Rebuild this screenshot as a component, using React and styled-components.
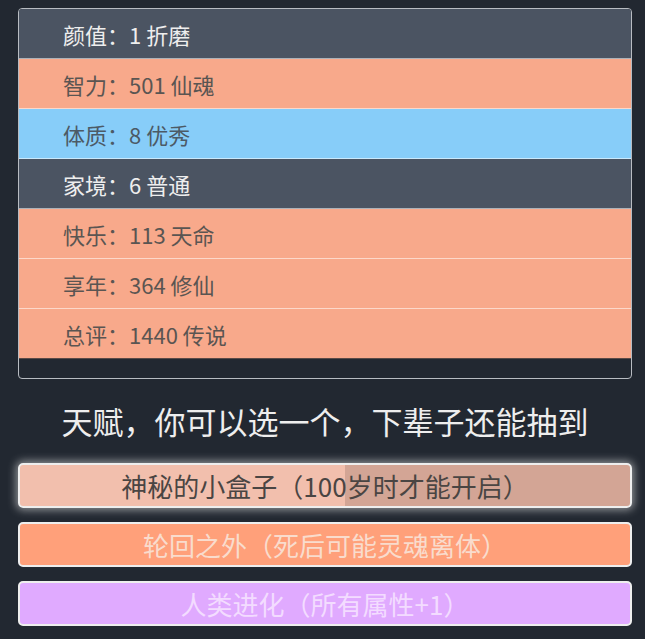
import styled, { createGlobalStyle } from "styled-components";

const GlobalStyle = createGlobalStyle`
  html, body {
    margin: 0;
    padding: 0;
    background: #222831;
  }
  body {
    font-family: "Noto Sans CJK SC", "Noto Sans", sans-serif;
  }
`;

const rowColors = {
  dark: { bg: "#4b5462", fg: "#eeeeee" },
  orange: { bg: "#f8a98b", fg: "#5a5552" },
  blue: { bg: "#87cdf9", fg: "#4c5a66" },
};

const props = [
  { label: "颜值", value: "1 折磨", tone: "dark" },
  { label: "智力", value: "501 仙魂", tone: "orange" },
  { label: "体质", value: "8 优秀", tone: "blue" },
  { label: "家境", value: "6 普通", tone: "dark" },
  { label: "快乐", value: "113 天命", tone: "orange" },
  { label: "享年", value: "364 修仙", tone: "orange" },
  { label: "总评", value: "1440 传说", tone: "orange" },
];

const talents = [
  { text: "神秘的小盒子（100岁时才能开启）", kind: "selected" },
  { text: "轮回之外（死后可能灵魂离体）", kind: "salmon" },
  { text: "人类进化（所有属性+1）", kind: "purple" },
];

const talentStyles = {
  selected: {
    bg: "linear-gradient(90deg, #f2bfad 0%, #f2bfad 53.3%, #d3a595 53.3%, #d3a595 100%)",
    fg: "#4a4543",
    glow: "0 0 8px 2px rgba(238, 238, 238, 0.55)",
  },
  salmon: { bg: "#ffa07a", fg: "#f9dccd", glow: "none" },
  purple: { bg: "#e0aaff", fg: "#f3dcff", glow: "none" },
};

const Page = styled.div`
  width: 614px;
  padding: 8px 0 0 18px;
  display: flex;
  flex-direction: column;
`;

const Panel = styled.ul`
  list-style: none;
  margin: 0;
  padding: 0 0 19px;
  border: 1px solid #b8bcc2;
  border-radius: 4px;
  overflow: hidden;
`;

const Row = styled.li`
  height: 49px;
  display: flex;
  align-items: center;
  padding-left: 44px;
  font-size: 22px;
  background: ${({ $tone }) => rowColors[$tone].bg};
  color: ${({ $tone }) => rowColors[$tone].fg};
  border-bottom: 1px solid rgba(255, 255, 255, 0.55);

  &:last-child {
    border-bottom: 1px solid #5b4a46;
  }
`;

const Title = styled.h2`
  margin: 19px 0 19px;
  text-align: center;
  font-size: 31px;
  font-weight: 400;
  color: #eeeeee;
  line-height: 46px;
`;

const TalentList = styled.ul`
  list-style: none;
  margin: 0;
  padding: 0;
  display: flex;
  flex-direction: column;
  gap: 14px;
`;

const Talent = styled.li`
  height: 41px;
  display: flex;
  align-items: center;
  justify-content: center;
  border: 2px solid #eeeeee;
  border-radius: 5px;
  font-size: 26px;
  background: ${({ $kind }) => talentStyles[$kind].bg};
  color: ${({ $kind }) => talentStyles[$kind].fg};
  box-shadow: ${({ $kind }) => talentStyles[$kind].glow};
`;

export default function App() {
  return (
    <>
      <GlobalStyle />
      <Page>
        <Panel>
          {props.map((p) => (
            <Row key={p.label} $tone={p.tone}>
              {p.label}：{p.value}
            </Row>
          ))}
        </Panel>
        <Title>天赋，你可以选一个，下辈子还能抽到</Title>
        <TalentList>
          {talents.map((t) => (
            <Talent key={t.text} $kind={t.kind}>
              {t.text}
            </Talent>
          ))}
        </TalentList>
      </Page>
    </>
  );
}
